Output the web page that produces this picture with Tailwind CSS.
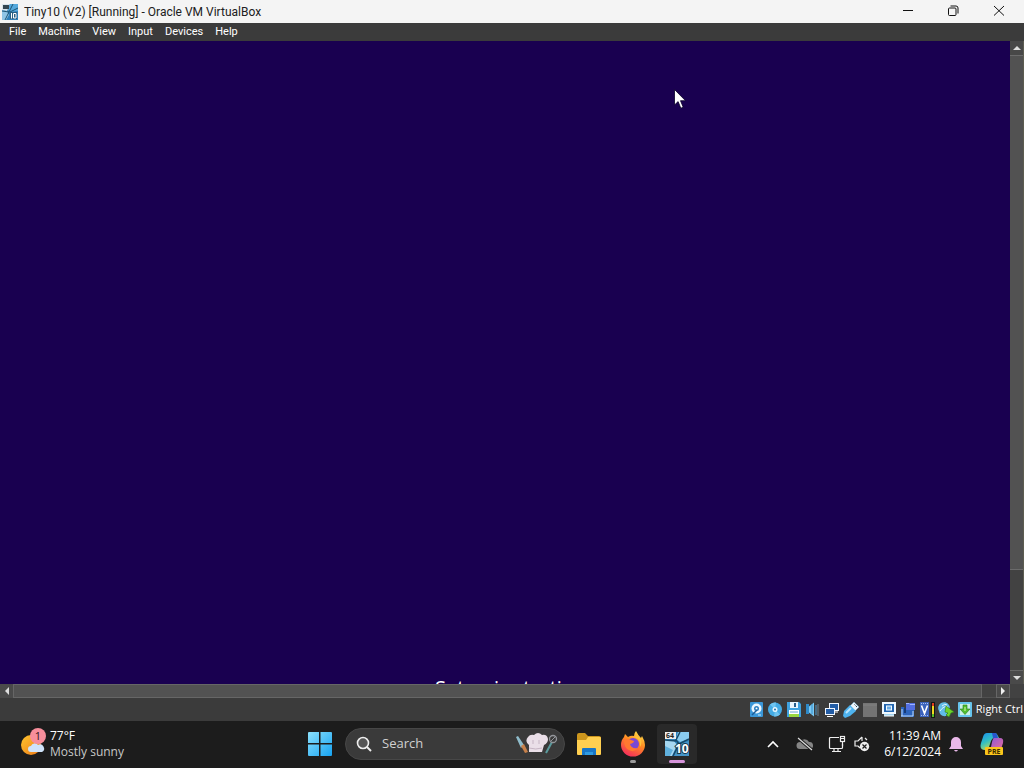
<!DOCTYPE html>
<html lang="en">
<head>
  <meta charset="UTF-8" />
  <meta name="viewport" content="width=device-width, initial-scale=1.0"/>
  <title>Tiny10 (V2) [Running] - Oracle VM VirtualBox</title>
  <script src="https://cdn.jsdelivr.net/npm/@tailwindcss/browser@4"></script>
</head>
<body class="h-screen flex flex-col overflow-hidden bg-[#1c1c1c] font-['Open_Sans','Noto_Sans',sans-serif] text-[12px] text-white">

  <!-- Title bar -->
  <header class="h-[23px] shrink-0 flex items-center bg-[#f4f4f4] text-[#202020]">
    <svg class="ml-[2px] size-4" viewBox="0 0 16 16">
      <rect width="16" height="16" fill="#2f7fb8"/>
      <path d="M0 0h8L5 7 0 6z" fill="#d9e3ea"/>
      <path d="M8 0h8v7l-8 1-2-2z" fill="#55a9dc"/>
      <path d="M0 6l5 1 2 4-3 5H0z" fill="#8fc5e6"/>
      <path d="M1 1h6v4H1z" fill="#34454f"/>
      <path d="M11 0L7 8l-4 8M8 8l8-4M0 7l7 1" stroke="#1d5475" fill="none"/>
      <rect x="8" y="8" width="7" height="7" fill="#2a5f82"/>
      <path d="M9.500 9v5.500M11.500 9.500h2.500v4.500h-2.500z" stroke="#fff" fill="none"/>
    </svg>
    <h1 class="ml-[6px] flex-1 truncate font-['Roboto',sans-serif]">Tiny10 (V2) [Running] - Oracle VM VirtualBox</h1>
    <button aria-label="Minimize" class="w-[45px] h-full flex items-center justify-center pb-[2px] hover:bg-gray-200">
      <svg class="size-3" viewBox="0 0 12 12"><path d="M1 5.500h10" stroke="#111"/></svg>
    </button>
    <button aria-label="Restore" class="w-[46px] h-full flex items-center justify-center pb-[2px] hover:bg-gray-200">
      <svg class="size-3" viewBox="0 0 12 12" fill="none" stroke="#111"><rect x="1.500" y="3" width="7.500" height="7.500" rx="1"/><path d="M3.500 1h5.500a2 2 0 0 1 2 2v5.500"/></svg>
    </button>
    <button aria-label="Close" class="w-[46px] mr-[2px] h-full flex items-center justify-center pb-[2px] hover:bg-red-500">
      <svg class="size-3" viewBox="0 0 12 12"><path d="M1 1l10 9.500M11 1L1 10.500" stroke="#111"/></svg>
    </button>
  </header>

  <!-- Menu bar -->
  <nav class="h-[18px] shrink-0 flex items-center pl-[3px] bg-[#3b3b3b] font-['Roboto',sans-serif] text-[11px] leading-[18px]">
    <button class="px-[6px] hover:bg-white/10">File</button>
    <button class="px-[6px] hover:bg-white/10">Machine</button>
    <button class="px-[6px] hover:bg-white/10">View</button>
    <button class="px-[6px] hover:bg-white/10">Input</button>
    <button class="px-[6px] hover:bg-white/10">Devices</button>
    <button class="px-[6px] hover:bg-white/10">Help</button>
  </nav>

  <!-- Guest screen -->
  <div class="flex-1 min-h-0 flex">
    <main class="relative flex-1 flex flex-col justify-end overflow-hidden bg-[#190050]">
      <p class="h-[10px] pl-[10px] overflow-hidden text-center text-[20px] leading-7">Setup is starting</p>
      <svg class="absolute left-[674px] top-[48px] w-3 h-5" viewBox="0 0 12 20">
        <path d="M.5.5v15.500l3.600-3.400 2.700 6.600 2.400-1-2.700-6.500H11.500z" fill="#fff" stroke="#0a0028" stroke-width=".8"/>
      </svg>
    </main>

    <!-- Vertical scrollbar -->
    <div class="w-[14px] flex flex-col bg-[#424242] border-r border-[#5c5c50]">
      <button aria-label="Scroll up" class="h-[14px] flex items-center justify-center bg-[#484848]">
        <svg class="w-2 h-1" viewBox="0 0 8 4"><path d="M0 4l4-4 4 4z" fill="#ddd"/></svg>
      </button>
      <div class="grow-[515] bg-[#525252] border-y border-[#6b6b6b]"></div>
      <div class="grow-[100]"></div>
      <button aria-label="Scroll down" class="h-[14px] flex items-center justify-center bg-[#4a4a4a] border-t border-[#666]">
        <svg class="w-2 h-1" viewBox="0 0 8 4"><path d="M0 0l4 4 4-4z" fill="#ddd"/></svg>
      </button>
    </div>
  </div>

  <!-- Horizontal scrollbar -->
  <div class="h-[14px] shrink-0 flex pr-[14px] bg-[#424242]">
    <button aria-label="Scroll left" class="w-[14px] flex items-center justify-center bg-[#4a4a4a] border-r border-[#666]">
      <svg class="w-1 h-2" viewBox="0 0 4 8"><path d="M4 0L0 4l4 4z" fill="#ddd"/></svg>
    </button>
    <div class="flex-1 bg-[#525252] border border-l-0 border-[#666]"></div>
    <div class="w-[14px] border-y border-[#505050]"></div>
    <button aria-label="Scroll right" class="w-[14px] flex items-center justify-center bg-[#4a4a4a] border border-[#666]">
      <svg class="w-1 h-2" viewBox="0 0 4 8"><path d="M0 0l4 4-4 4z" fill="#eee"/></svg>
    </button>
  </div>

  <!-- Machine status bar -->
  <footer class="h-[23px] shrink-0 flex items-center justify-end gap-[3px] pr-px bg-[#3b3b3b] text-[11px]">
    <!-- hard disk -->
    <svg class="size-4" viewBox="0 0 16 16">
      <rect x="2" y="0" width="13" height="15" rx="1" fill="#3b97d8"/>
      <circle cx="8.500" cy="6.500" r="5" fill="#e9f6ff"/><circle cx="8.500" cy="6.500" r="2.500" fill="#2b7fc0"/><circle cx="8.500" cy="6.500" r="1" fill="#fff"/>
      <path d="M4 13l5-5" stroke="#1d5d97" stroke-width="1.500"/><path d="M10 13h3" stroke="#c5e8ff"/>
    </svg>
    <!-- optical disk -->
    <svg class="size-4" viewBox="0 0 16 16">
      <circle cx="8" cy="7.500" r="7" fill="#45abe4"/><path d="M8 7.500L3 2.500a7 7 0 0 1 6-2zM8 7.500l5 5a7 7 0 0 1-6 2z" fill="#6fc4f0"/>
      <circle cx="8" cy="7.500" r="2.500" fill="#e8f8ff"/><circle cx="8" cy="7.500" r="1" fill="#2a6da0"/>
    </svg>
    <!-- floppy -->
    <svg class="size-4" viewBox="0 0 16 16">
      <path d="M1 0h12l2 2v13H1z" fill="#3fa2e0"/><rect x="4" y="0" width="8" height="6" fill="#eaf7ff"/><rect x="8" y="1" width="2" height="4" fill="#27608f"/>
      <rect x="3" y="8" width="10" height="7" fill="#fff"/><path d="M3 12h10v3H3z" fill="#99d83f"/><path d="M4 10h8" stroke="#6ba6cd"/>
    </svg>
    <!-- audio -->
    <svg class="size-4" viewBox="0 0 16 16">
      <rect x="1" y="2" width="3" height="10" fill="#2f8ac8"/><path d="M4 4.500l5-4v14l-5-4z" fill="#7ccaf5"/><path d="M7 2v10" stroke="#358dc9"/>
      <rect x="10" y="3" width="2" height="10" fill="#456a82"/><rect x="12" y="2" width="2" height="12" fill="#555e64"/>
    </svg>
    <!-- network -->
    <svg class="size-4" viewBox="0 0 16 16">
      <rect x="5.500" y="1.500" width="9" height="7" fill="#235da6" stroke="#f2f7ff"/><path d="M9 10h5" stroke="#fff"/>
      <rect x="1.500" y="6.500" width="9" height="6" fill="#235da6" stroke="#f2f7ff"/><path d="M3 14.500h6" stroke="#fff"/>
    </svg>
    <!-- usb -->
    <svg class="size-4" viewBox="0 0 16 16">
      <path d="M11 0l5 5-4 4-5-5z" fill="#eef6fb" stroke="#78a9c7" stroke-width=".6"/><path d="M7 3l6 6-6 5-5 2-2-2 1-5z" fill="#4eb3ef"/><path d="M3 11l5-5" stroke="#b9e6ff" stroke-width="2"/><path d="M11.500 2.500l1 1M13 4l1 1" stroke="#345"/>
    </svg>
    <!-- shared folders -->
    <svg class="size-4" viewBox="0 0 16 16"><rect x="1" y="1" width="14" height="14" fill="#747474"/><path d="M1 3h14" stroke="#818181"/></svg>
    <!-- display -->
    <svg class="size-4" viewBox="0 0 16 16">
      <path d="M1 0h14v12H1z" fill="#eff8ff"/><path d="M3 2h10v8H3z" fill="#2266b1"/><rect x="5.500" y="4" width="5" height="4" fill="#6caee5" stroke="#f2faff"/><path d="M3 12h10v2H3z" fill="#a1d2ee"/><path d="M3 14h10" stroke="#fff"/>
    </svg>
    <!-- recording -->
    <svg class="size-4" viewBox="0 0 16 16">
      <path d="M1 5h3l1 2h9v8H1z" fill="#2c64bc"/><path d="M2 14V7M1 14h12V9" stroke="#bcdcff" fill="none"/><path d="M6 1h9v7H6z" fill="#526ee0"/><path d="M6 1.500h3l1 1h5" stroke="#9db2ff" fill="none"/><path d="M4 6h2v5H4z" fill="#163b76"/>
    </svg>
    <!-- cpu features and load gauge -->
    <svg class="size-4" viewBox="0 0 16 16">
      <rect x="1" y="0" width="9" height="15" fill="#3c63bd"/><path d="M2.500 3.500l3 8 3-8" stroke="#fff" stroke-width="1.600" fill="none"/><path d="M2 13.500h7M2 1.500h7" stroke="#a9bfed" stroke-dasharray="1 1"/>
      <rect x="12" y="0" width="4" height="16" fill="#161616"/><rect x="13" y="1" width="2" height="4" fill="#e03a1e"/><rect x="13" y="4" width="2" height="8" fill="#f0d820"/><rect x="13" y="12" width="2" height="3" fill="#57bd27"/>
    </svg>
    <!-- mouse integration -->
    <svg class="size-4" viewBox="0 0 16 16">
      <path d="M1 9a5 5 0 0 1 10-6l1 2-4 9q-6 1-7-5z" fill="#61bce8"/><path d="M4 4q3-3 5-1M2 9q4-6 8-4" stroke="#e0f5ff" fill="none"/><path d="M8 4l8 6-3 1-2 4-3-2 2-2-3-1z" fill="#6ed22c" stroke="#2b7d19" stroke-width=".6"/>
    </svg>
    <!-- keyboard capture -->
    <svg class="size-4" viewBox="0 0 16 16">
      <rect x="1" y="0" width="14" height="15" rx="1" fill="#67c4ed"/><rect x="3" y="2" width="10" height="11" fill="#c9f0e6"/><path d="M6 3h4v4h3l-5 5.500L3 7h3z" fill="#51bd2c" stroke="#277e20" stroke-width=".6"/><path d="M8 5v4" stroke="#d6f8a9"/>
    </svg>
    <span class="whitespace-nowrap">Right Ctrl</span>
  </footer>

  <!-- Taskbar -->
  <div class="h-[47px] shrink-0 grid grid-cols-[305px_1fr_auto] items-center pb-px bg-[#1c1c1c]">
    <a href="#" class="flex items-center gap-[4px] pl-5">
      <svg class="w-[26px] h-8" viewBox="0 0 26 32">
        <defs><linearGradient id="sun" x1="0" y1="0" x2="1" y2="1"><stop stop-color="#ffc62e"/><stop offset="1" stop-color="#ed7918"/></linearGradient></defs>
        <circle cx="11" cy="17" r="10" fill="url(#sun)"/>
        <path d="M11 24a3 3 0 0 1 0-6 4 4 0 0 1 7-1 3.500 3.500 0 0 1 4 7z" fill="#cfe3fa"/>
        <circle cx="18" cy="8" r="8" fill="#f78e9b"/>
        <text x="18" y="12" text-anchor="middle" font-size="11" fill="#30151b">1</text>
      </svg>
      <span class="leading-4"><span class="block">77°F</span><span class="block text-[#c8c8c8]">Mostly sunny</span></span>
    </a>

    <div class="flex items-center">
      <button aria-label="Start" class="w-[30px] flex justify-center">
        <svg class="size-6" viewBox="0 0 24 24">
          <defs><linearGradient id="win" x1="0" y1="0" x2="1" y2="1"><stop stop-color="#8be0fc"/><stop offset="1" stop-color="#16a3f2"/></linearGradient></defs>
          <path d="M0 1q0-1 1-1h10v11H0zM12.500 0H23q1 0 1 1v10H12.500zM0 12.500h11V24H1q-1 0-1-1zM12.500 12.500H24V23q0 1-1 1H12.500z" fill="url(#win)"/>
        </svg>
      </button>
      <label class="ml-[10px] w-[220px] h-8 flex items-center rounded-full bg-[#3a3a3a] border border-[#474747] pl-[10px] pr-[6px]">
        <svg class="size-4 shrink-0" viewBox="0 0 16 16" fill="none" stroke="#eee" stroke-width="1.600"><circle cx="7" cy="7" r="5.500" fill="#555"/><path d="M11 11l4 4" stroke-width="2"/></svg>
        <input type="text" aria-label="Search" placeholder="Search" class="ml-[10px] min-w-0 flex-1 bg-transparent text-[13px] placeholder-[#d0d0d0] outline-none"/>
        <svg class="w-11 h-6 shrink-0" viewBox="0 0 44 24">
          <path d="M2 5l2-1 6 9-3 3z" fill="#8fbccb"/><path d="M7 14l3-2 4 8-3 1z" fill="#c7814b"/>
          <path d="M15 13a5 5 0 0 1-1-8q2-3 6-2 4-4 8 0 5-1 6 4 0 4-4 6l-2 7H15z" fill="#eadfe8"/><path d="M15 16q7 2 13 0M19 8v4M25 8v4" stroke="#c6b5c4" fill="none"/>
          <path d="M32 21l6-11" stroke="#5a9a9c" stroke-width="2"/><circle cx="39" cy="7" r="3.500" fill="none" stroke="#94969b" stroke-width="1.300"/><path d="M37 9l4-4" stroke="#94969b"/>
        </svg>
      </label>
      <button aria-label="File Explorer" class="ml-[11px] w-[26px]">
        <svg class="w-[26px] h-6" viewBox="0 0 26 24">
          <path d="M1 3q0-2 2-2h6l3 3h11q2 0 2 2v6H1z" fill="#cc961d"/><path d="M1 8h9l2-3h12q1 0 1 1v16q0 1-1 1H2q-1 0-1-1z" fill="#ffcf50"/>
          <path d="M6 17q0-1 1-1h12q1 0 1 1v6H6z" fill="#1776c8"/><path d="M9 20h8v3H9z" fill="#2f9be1"/>
        </svg>
      </button>
      <button aria-label="Firefox" class="ml-[11px] w-10 h-10 flex flex-col items-center justify-end gap-[3px]">
        <svg class="w-[26px] h-[26px]" viewBox="0 0 26 26">
          <defs><linearGradient id="fox" x1=".8" y1="0" x2=".3" y2="1"><stop stop-color="#ffe64a"/><stop offset=".45" stop-color="#ff8a22"/><stop offset="1" stop-color="#f32c5d"/></linearGradient></defs>
          <path d="M4 6l1-3 3 3q3-2 6-1 0-3 2-5 2 4 5 7l1-2q3 5 3 9a12 11.500 0 0 1-24 0q0-5 3-8z" fill="url(#fox)"/>
          <circle cx="13" cy="13" r="6" fill="#7948d4"/><path d="M4 9q4-2 7 0l3 1q0 2-4 3 1 5 8 4-4 5-9 2-5-2-5-10z" fill="#ff7930"/><path d="M14 6q7 1 6 10 3-5 0-9-3-3-6-1z" fill="#ffc23b"/>
        </svg>
        <span class="w-[6px] h-[3px] mb-px rounded-full bg-[#9b9b9b]"></span>
      </button>
      <button aria-label="VirtualBox" class="ml-[4px] w-10 h-10 flex flex-col items-center justify-end gap-[3px] rounded bg-[#292929]">
        <svg class="w-6 h-[25px]" viewBox="0 0 24 25">
          <rect width="24" height="24" fill="#2f83bd"/><path d="M13 0h11v7l-9 3-4-3z" fill="#8acbee"/><path d="M0 8l9 1 3 4-5 11H0z" fill="#a6d7f0"/><path d="M15 12l9-3v15H9z" fill="#4695c8"/>
          <path d="M0 14l8 4-3 6H0z" fill="#5fb0dd"/>
          <path d="M15 0l-4 8 3 4-6 12M0 8l11 1M14 12l10-5" stroke="#174a69" stroke-width="1.500" fill="none"/>
          <rect width="11" height="7" fill="#eee"/><text x="1" y="6" font-size="7" font-weight="700" fill="#222">64</text>
          <text x="10" y="21" font-size="12" font-weight="700" fill="#fff" stroke="#17394e" stroke-width="2" paint-order="stroke">10</text>
        </svg>
        <span class="w-4 h-[3px] mb-px rounded-full bg-[#d795dc]"></span>
      </button>
    </div>

    <div class="flex items-center pr-5">
      <button aria-label="Show hidden icons" class="w-3"><svg class="w-3 h-2" viewBox="0 0 12 8"><path d="M1 7l5-5 5 5" stroke="#fff" stroke-width="1.600" fill="none"/></svg></button>
      <button aria-label="OneDrive" class="ml-[17px] w-[18px]">
        <svg class="w-[18px] h-4" viewBox="0 0 18 16"><path d="M4 13a3.500 3.500 0 0 1 0-7 5 5 0 0 1 9 0 3.500 3.500 0 0 1 1 7z" fill="#858585"/><path d="M2 2l14 12" stroke="#1c1c1c" stroke-width="3"/><path d="M2 2l14 12" stroke="#ddd" stroke-width="1.200"/></svg>
      </button>
      <button aria-label="Network" class="ml-[14px] w-[18px]">
        <svg class="w-[18px] h-[18px]" viewBox="0 0 18 18" fill="none" stroke="#eee" stroke-width="1.200"><path d="M11 2.500H2.500q-1 0-1 1v9q0 1 1 1h11q1 0 1-1V9M6 14v2.500M10 14v2.500M4 16.500h9"/><rect x="12.500" y="1.500" width="4" height="5"/><path d="M14.500 6.500V11M13 3.500h3"/></svg>
      </button>
      <button aria-label="Volume muted" class="ml-[8px] w-4">
        <svg class="w-4 h-4" viewBox="0 0 16 16"><path d="M8 1L4 5H1v5h3l2 2M8 1v4M11 2l2 2" stroke="#eee" stroke-width="1.200" fill="none"/><circle cx="10.500" cy="10.500" r="4.700" fill="#eee"/><path d="M8.500 8.500l4 4M12.500 8.500l-4 4" stroke="#1c1c1c" stroke-width="1.200"/></svg>
      </button>
      <time class="ml-[14px] text-right leading-4">11:39 AM<br>6/12/2024</time>
      <button aria-label="Notifications" class="ml-[8px] w-[14px]">
        <svg class="w-[14px] h-4" viewBox="0 0 14 16"><path d="M2 10V6a5 5 0 0 1 10 0v4l2 3H0zM5 14h4q-2 3-4 0z" fill="#e9b8e9"/></svg>
      </button>
      <button aria-label="Copilot preview" class="ml-[17px] w-6">
        <svg class="w-6 h-6" viewBox="0 0 24 24">
          <defs><linearGradient id="cp1" x1="0" y1="0" x2=".6" y2="1"><stop stop-color="#188cf0"/><stop offset=".5" stop-color="#32bfc2"/><stop offset="1" stop-color="#d5df45"/></linearGradient><linearGradient id="cp2" x1="0" y1="0" x2="1" y2="1"><stop stop-color="#8155de"/><stop offset="1" stop-color="#f46f92"/></linearGradient></defs>
          <path d="M7 1h8q2 0 3 3l1 2h-5q-2 0-3 3l-2 6q-1 3-4 3-6 0-4-7l2-6q1-4 4-4z" fill="url(#cp1)"/><path d="M14 6h6q4 0 3 5l-2 6q-1 4-5 4H9q-2 0-2-3 3 1 4-3l1-5q1-4 2-4z" fill="url(#cp2)"/><path d="M12 1h3q2 0 3 5h-5z" fill="#2855cd"/>
          <rect x="5" y="15" width="18" height="8" rx="1" fill="#fbc51b"/><text x="14" y="21.500" text-anchor="middle" font-size="7" font-weight="700" fill="#3a2b00">PRE</text>
        </svg>
      </button>
    </div>
  </div>
</body>
</html>
